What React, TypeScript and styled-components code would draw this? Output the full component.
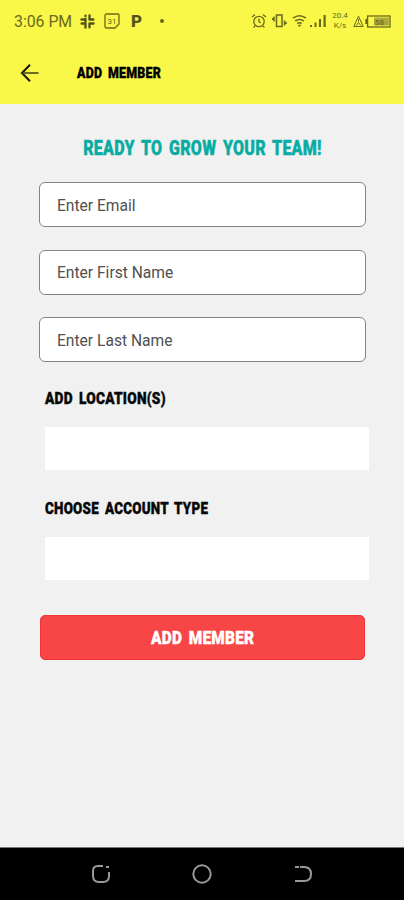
import React from 'react';
import styled, { createGlobalStyle } from 'styled-components';

const GlobalStyle = createGlobalStyle`
  * { box-sizing: border-box; }
  body { margin: 0; background: #f1f1f1; font-family: Roboto, "Liberation Sans", sans-serif; }
`;

const Screen = styled.div`
  width: 404px;
  height: 900px;
  display: flex;
  flex-direction: column;
  background: #f1f1f1;
  overflow: hidden;
`;

const TopArea = styled.div`
  height: 104px;
  background: #f9f747;
`;

const StatusBar = styled.div`
  height: 42px;
  padding: 0 13px 0 14px;
  display: flex;
  align-items: center;
  justify-content: space-between;
  color: #6b6a1c;
`;

const StatusGroup = styled.div`
  display: flex;
  align-items: center;
`;

const Clock = styled.span`
  width: 66px;
  padding-top: 1px;
  font-size: 15.8px;
  line-height: 20px;
  white-space: nowrap;
`;

const StatusIcon = styled.svg<{ $gap?: number }>`
  display: block;
  flex: none;
  margin-left: ${({ $gap = 0 }) => $gap}px;
`;

const CarrierMark = styled.span`
  width: 12px;
  margin-left: 11px;
  font-size: 17px;
  line-height: 18px;
  font-weight: 900;
  color: #55541a;
`;

const Dot = styled.span`
  width: 4px;
  height: 4px;
  margin-left: 17px;
  border-radius: 50%;
  background: #66651c;
`;

const Speed = styled.span`
  width: 18px;
  margin-left: 4px;
  font-size: 8px;
  line-height: 10.5px;
  text-align: center;
`;

const TitleBar = styled.header`
  height: 62px;
  padding-left: 20px;
  display: flex;
  align-items: center;
`;

const BackButton = styled.button`
  width: 57px;
  height: 24px;
  padding: 0;
  border: 0;
  display: flex;
  align-items: center;
  background: none;
`;

const Display = styled.span<{ $size: number; $stretch: number; $center?: boolean }>`
  display: inline-block;
  font-size: ${({ $size }) => $size}px;
  line-height: 20px;
  font-weight: 900;
  letter-spacing: 0.3px;
  word-spacing: 3px;
  -webkit-text-stroke: 0.4px currentColor;
  white-space: nowrap;
  text-transform: uppercase;
  transform: scaleX(${({ $stretch }) => $stretch});
  transform-origin: ${({ $center }) => ($center ? 'center' : 'left center')};
`;

const Form = styled.main`
  flex: 1;
  display: flex;
  flex-direction: column;
  padding: 35px 35px 0 39px;
`;

const Heading = styled.h1`
  height: 20px;
  margin: 0 4px 23px 0;
  display: flex;
  justify-content: center;
  color: #08aca3;
`;

const Fields = styled.div`
  width: 327px;
  display: grid;
  grid-template-rows: repeat(3, 45px);
  row-gap: 22.5px;
`;

const Field = styled.input`
  width: 100%;
  height: 45px;
  padding: 2px 17px 0;
  border: 1px solid #838383;
  border-radius: 6px;
  background: #fff;
  outline: 0;
  font-family: Roboto, sans-serif;
  font-size: 15.6px;
  &::placeholder { color: #505050; opacity: 1; }
`;

const Section = styled.section<{ $top: number }>`
  margin: ${({ $top }) => $top}px 0 0 6px;
  width: 324px;
`;

const SectionLabel = styled.h2`
  height: 20px;
  margin: 0 0 18px;
  display: flex;
  color: #080808;
`;

const Picker = styled.div`
  height: 43px;
  background: #fff;
`;

const Submit = styled.button`
  width: 325px;
  height: 45px;
  margin: 35px 0 0 1px;
  padding: 0;
  border: 1px solid #ee3438;
  border-radius: 5px;
  background: #f84545;
  color: #fff;
  font-family: inherit;
`;

const NavBar = styled.nav`
  height: 53px;
  padding: 0 90px 1px;
  display: flex;
  align-items: center;
  justify-content: space-between;
  border-top: 1px solid #777;
  background: #000;
`;

function LeftStatus() {
  return (
    <StatusGroup>
      <Clock>3:06 PM</Clock>
      <StatusIcon width="15" height="15" viewBox="0 0 15 15" fill="none" stroke="#55541a" strokeWidth="2.4" strokeLinecap="round">
        <path d="M5.5 4.8v3M9.5 1.5v4M9.5 9.8v3.4M5.5 9.5v4M1.5 5.5h4M9.8 5.5h3.5M1.7 9.5h3.5M9.5 9.5h4M5.5 1.7v.2" />
      </StatusIcon>
      <StatusIcon $gap={9} width="16" height="16" viewBox="0 0 16 16">
        <path d="M2.5 1h11.5q1 0 1 1v9l-4 4H2.5Q1 15 1 13.5v-11Q1 1 2.5 1z" fill="none" stroke="#6b6a1c" strokeWidth="1.3" />
        <text x="8" y="11" textAnchor="middle" fontSize="8" fontFamily="Roboto" fill="#6b6a1c">31</text>
      </StatusIcon>
      <CarrierMark>P</CarrierMark>
      <Dot />
    </StatusGroup>
  );
}

function RightStatus() {
  return (
    <StatusGroup>
      <StatusIcon width="16" height="16" viewBox="0 0 16 16" fill="none" stroke="currentColor" strokeWidth="1.3">
        <circle cx="8" cy="8.5" r="5.2" />
        <path d="M1 4l3-2.5M15 4l-3-2.5M8 5.8v3l1.8 1M4 13l-1.4 1.5M12 13l1.4 1.5" />
      </StatusIcon>
      <StatusIcon $gap={5} width="15" height="16" viewBox="0 0 15 16" fill="none" stroke="currentColor" strokeWidth="1.5">
        <path d="M4.5 2h5.5v11.5H4.5zM2 3.5v5M.7 5v2M12.5 7.5v5M14 9v2" />
      </StatusIcon>
      <StatusIcon $gap={5} width="17" height="16" viewBox="0 0 17 16" fill="none" stroke="currentColor" strokeWidth="1.6">
        <path d="M1 5.2q6.5-5 13 0M3.3 8q4.2-3 8.4 0M5.3 10.5q2.2-1.5 4.4 0" />
        <path d="M6.3 12.2h2.4l-1.2 1.5z" fill="currentColor" strokeWidth=".7" />
      </StatusIcon>
      <StatusIcon $gap={1} width="17" height="14" viewBox="0 0 17 14" fill="currentColor">
        <path d="M0 11h2v2H0zM4.5 8.5h2V13h-2zM9 5h2v8H9zM13.5 1h2.2v12h-2.2z" />
      </StatusIcon>
      <Speed>20.4<br />K/s</Speed>
      <StatusIcon $gap={4} width="11" height="13" viewBox="0 0 11 13" fill="none" stroke="currentColor" strokeWidth="1">
        <path d="M5.5 1.2l4.7 10.3H.8zM5.5 4v2.5M3.2 10.5l2.3-3 2.3 3" />
      </StatusIcon>
      <StatusIcon $gap={1} width="26" height="13" viewBox="0 0 26 13">
        <rect x="2.6" y="1" width="22.4" height="11" fill="#f9f747" stroke="#6b6a1c" strokeWidth="1.3" />
        <path d="M.3 4h1.9v5H.3z" fill="#6b6a1c" />
        <path d="M9 2.5h14.8v8H9z" fill="#aaa73d" />
        <text x="14.5" y="9.5" textAnchor="middle" fontSize="8" fontWeight="700" fontFamily="Roboto" fill="#77751f">58</text>
      </StatusIcon>
    </StatusGroup>
  );
}

export default function App() {
  return (
    <>
      <GlobalStyle />
      <Screen>
        <TopArea>
          <StatusBar>
            <LeftStatus />
            <RightStatus />
          </StatusBar>
          <TitleBar>
            <BackButton aria-label="Back">
              <svg width="20" height="20" viewBox="0 0 20 20" fill="none" stroke="#17170a">
                <path d="M10 1.8L2 10l8 8.2" strokeWidth="2" />
                <path d="M2.5 10h16" strokeWidth="1.7" stroke="#55541a" />
              </svg>
            </BackButton>
            <Display $size={15.5} $stretch={0.8}>Add member</Display>
          </TitleBar>
        </TopArea>
        <Form>
          <Heading><Display $size={19.5} $stretch={0.82} $center>Ready to grow your team!</Display></Heading>
          <Fields>
            <Field placeholder="Enter Email" />
            <Field placeholder="Enter First Name" />
            <Field placeholder="Enter Last Name" />
          </Fields>
          <Section $top={27}>
            <SectionLabel><Display $size={16.5} $stretch={0.83}>Add location(s)</Display></SectionLabel>
            <Picker />
          </Section>
          <Section $top={29}>
            <SectionLabel><Display $size={16.5} $stretch={0.81}>Choose account type</Display></SectionLabel>
            <Picker />
          </Section>
          <Submit><Display $size={19} $stretch={0.81} $center>Add member</Display></Submit>
        </Form>
        <NavBar>
          <svg width="22" height="22" viewBox="0 0 22 22" fill="none" stroke="#999" strokeWidth="2">
            <path d="M13 3H8Q3 3 3 8v5q0 6 6 6h4q6 0 6-6V9M16 4h3" />
          </svg>
          <svg width="22" height="22" viewBox="0 0 22 22" fill="none" stroke="#999" strokeWidth="2">
            <circle cx="11" cy="11" r="8.7" />
          </svg>
          <svg width="22" height="22" viewBox="0 0 22 22" fill="none" stroke="#999" strokeWidth="2">
            <path d="M3 4h4M8 4h4q7 0 7 7t-7 7H3" />
          </svg>
        </NavBar>
      </Screen>
    </>
  );
}
